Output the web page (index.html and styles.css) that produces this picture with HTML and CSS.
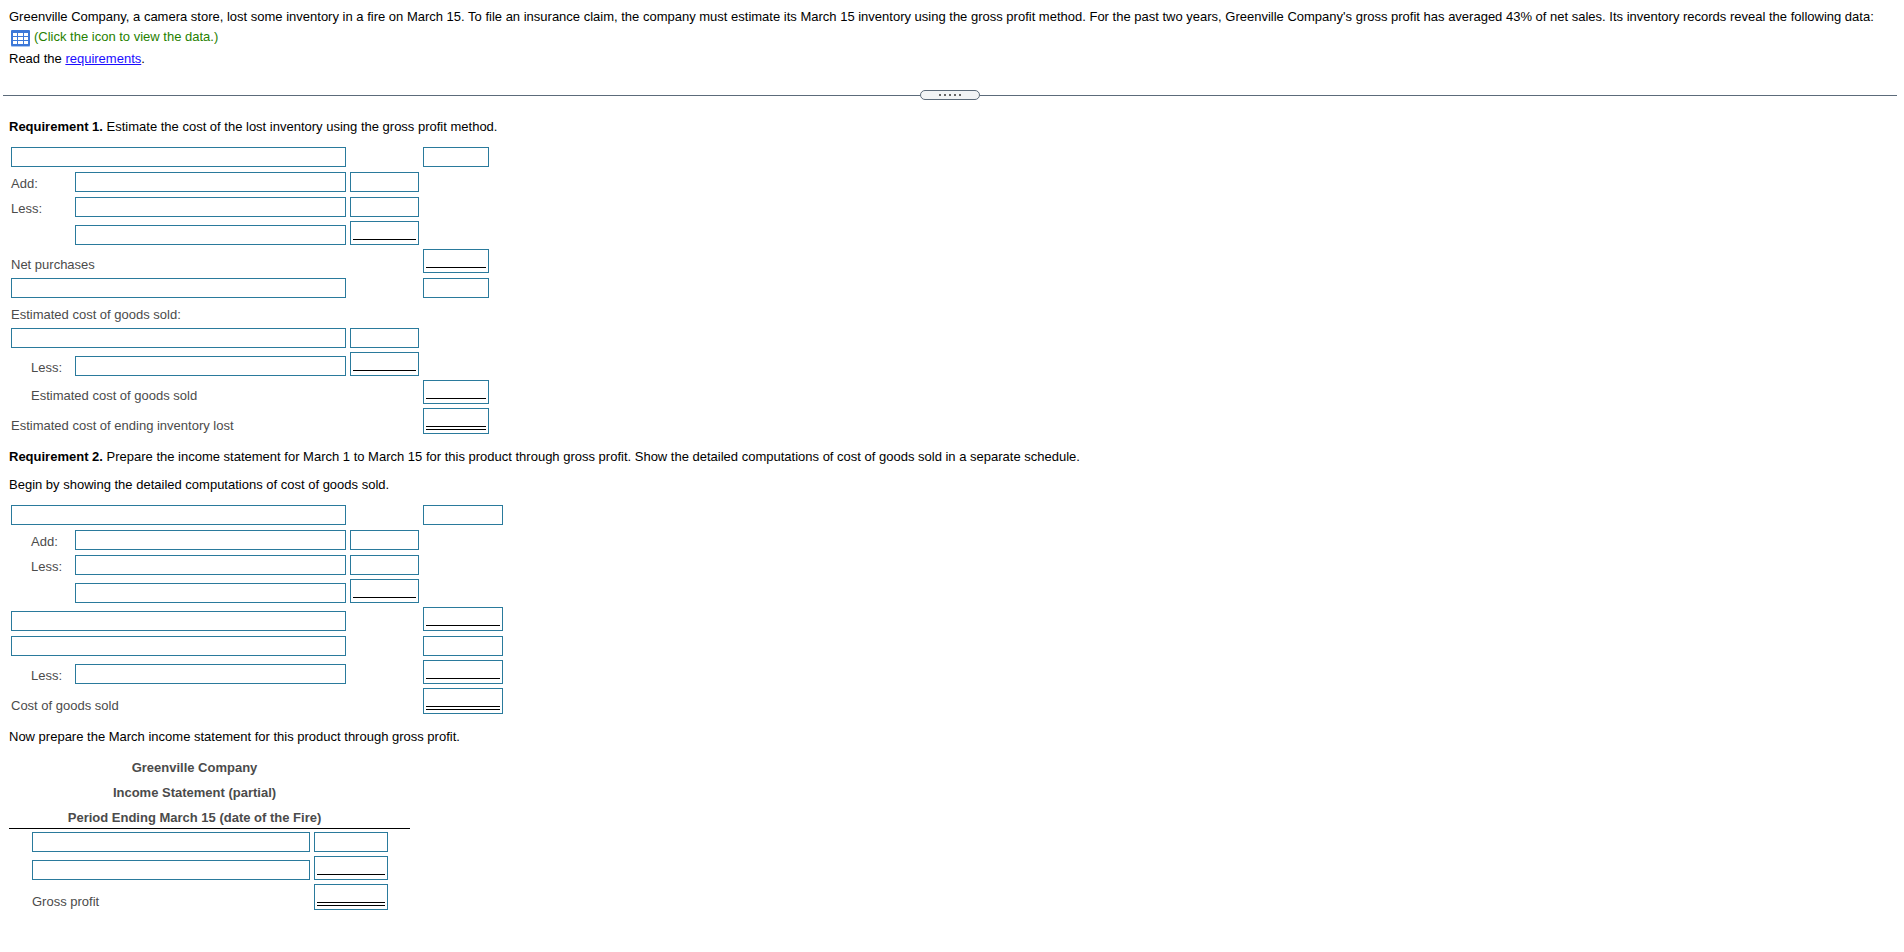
FILE: index.html
```html
<!DOCTYPE html>
<html lang="en">
<head>
<meta charset="utf-8">
<title>Greenville Company - Gross profit method</title>
<link rel="stylesheet" href="styles.css">
</head>
<body>
<header class="intro">
  <p>Greenville Company, a camera store, lost some inventory in a fire on March 15. To file an insurance claim, the company must estimate its March 15 inventory using the gross profit method. For the past two years, Greenville Company's gross profit has averaged 43% of net sales. Its inventory records reveal the following data:</p>
  <button type="button" class="data-button">
    <svg class="data-icon" width="19" height="17" viewBox="0 0 19 17" aria-hidden="true">
      <rect y="1" width="19" height="16" rx="1" fill="#a9c6f2"/>
      <rect width="19" height="16" rx="1" fill="#3c78d8"/>
      <path fill="#fff" d="M2 3h4v3H2zM7 3h5v3H7zM13 3h4v3h-4zM2 7h4v3H2zM7 7h5v3H7zM13 7h4v3h-4zM2 11h4v3H2zM7 11h5v3H7zM13 11h4v3h-4z"/>
    </svg>
    <span>(Click the icon to view the data.)</span>
  </button>
  <p>Read the <a href="#requirements">requirements</a>.</p>
</header>

<div class="divider">
  <button type="button" class="handle" aria-label="Resize panels"><i></i><i></i><i></i><i></i><i></i></button>
</div>

<main class="work">
  <p id="requirements"><b>Requirement 1.</b> Estimate the cost of the lost inventory using the gross profit method.</p>
  <table class="sheet">
    <colgroup><col class="col-label"><col class="col-name"><col class="col-detail"><col class="col-total"></colgroup>
    <tbody>
    <tr><td colspan="2"><div class="box"><input type="text" aria-label="Opening account"></div></td><td></td><td><div class="box"><input type="text" aria-label="Opening amount"></div></td></tr>
    <tr><th scope="row">Add:</th><td><div class="box"><input type="text" aria-label="Added account"></div></td><td><div class="box"><input type="text" aria-label="Added amount"></div></td><td></td></tr>
    <tr><th scope="row">Less:</th><td><div class="box"><input type="text" aria-label="First deducted account"></div></td><td><div class="box"><input type="text" aria-label="First deducted amount"></div></td><td></td></tr>
    <tr><td></td><td><div class="box"><input type="text" aria-label="Second deducted account"></div></td><td><div class="box subtotal"><input type="text" aria-label="Second deducted amount"></div></td><td></td></tr>
    <tr><th scope="row" colspan="2">Net purchases</th><td></td><td><div class="box subtotal"><input type="text" aria-label="Net purchases"></div></td></tr>
    <tr><td colspan="2"><div class="box"><input type="text" aria-label="Subtotal account"></div></td><td></td><td><div class="box"><input type="text" aria-label="Subtotal amount"></div></td></tr>
    <tr><th scope="row" colspan="4">Estimated cost of goods sold:</th></tr>
    <tr><td colspan="2"><div class="box"><input type="text" aria-label="Cost of goods sold base account"></div></td><td><div class="box"><input type="text" aria-label="Cost of goods sold base amount"></div></td><td></td></tr>
    <tr><th scope="row" class="indent">Less:</th><td><div class="box"><input type="text" aria-label="Cost of goods sold deduction"></div></td><td><div class="box subtotal"><input type="text" aria-label="Cost of goods sold deduction amount"></div></td><td></td></tr>
    <tr><th scope="row" class="indent" colspan="2">Estimated cost of goods sold</th><td></td><td><div class="box subtotal"><input type="text" aria-label="Estimated cost of goods sold"></div></td></tr>
    <tr><th scope="row" colspan="2">Estimated cost of ending inventory lost</th><td></td><td><div class="box total"><input type="text" aria-label="Estimated cost of ending inventory lost"></div></td></tr>
    </tbody>
  </table>

  <p><b>Requirement 2.</b> Prepare the income statement for March 1 to March 15 for this product through gross profit. Show the detailed computations of cost of goods sold in a separate schedule.</p>
  <p class="follow">Begin by showing the detailed computations of cost of goods sold.</p>
  <table class="sheet">
    <colgroup><col class="col-label"><col class="col-name"><col class="col-detail"><col class="col-total-wide"></colgroup>
    <tbody>
    <tr><td colspan="2"><div class="box"><input type="text" aria-label="Schedule opening account"></div></td><td></td><td><div class="box"><input type="text" aria-label="Schedule opening amount"></div></td></tr>
    <tr><th scope="row" class="indent">Add:</th><td><div class="box"><input type="text" aria-label="Schedule added account"></div></td><td><div class="box"><input type="text" aria-label="Schedule added amount"></div></td><td></td></tr>
    <tr><th scope="row" class="indent">Less:</th><td><div class="box"><input type="text" aria-label="Schedule first deducted account"></div></td><td><div class="box"><input type="text" aria-label="Schedule first deducted amount"></div></td><td></td></tr>
    <tr><td></td><td><div class="box"><input type="text" aria-label="Schedule second deducted account"></div></td><td><div class="box subtotal"><input type="text" aria-label="Schedule second deducted amount"></div></td><td></td></tr>
    <tr><td colspan="2"><div class="box"><input type="text" aria-label="Schedule net account"></div></td><td></td><td><div class="box subtotal"><input type="text" aria-label="Schedule net amount"></div></td></tr>
    <tr><td colspan="2"><div class="box"><input type="text" aria-label="Schedule subtotal account"></div></td><td></td><td><div class="box"><input type="text" aria-label="Schedule subtotal amount"></div></td></tr>
    <tr><th scope="row" class="indent">Less:</th><td><div class="box"><input type="text" aria-label="Schedule final deduction"></div></td><td></td><td><div class="box subtotal"><input type="text" aria-label="Schedule final deduction amount"></div></td></tr>
    <tr><th scope="row" colspan="2">Cost of goods sold</th><td></td><td><div class="box total"><input type="text" aria-label="Cost of goods sold"></div></td></tr>
    </tbody>
  </table>

  <p>Now prepare the March income statement for this product through gross profit.</p>
  <table class="sheet statement">
    <colgroup><col class="col-item"><col class="col-amount"><col class="col-end"></colgroup>
    <thead>
    <tr><th colspan="3">Greenville Company</th></tr>
    <tr><th colspan="3">Income Statement (partial)</th></tr>
    <tr><th colspan="3">Period Ending March 15 (date of the Fire)</th></tr>
    </thead>
    <tbody>
    <tr><td class="item"><div class="box"><input type="text" aria-label="First statement line"></div></td><td><div class="box"><input type="text" aria-label="First statement amount"></div></td><td></td></tr>
    <tr><td class="item"><div class="box"><input type="text" aria-label="Second statement line"></div></td><td><div class="box subtotal"><input type="text" aria-label="Second statement amount"></div></td><td></td></tr>
    <tr><th scope="row" class="item">Gross profit</th><td><div class="box total"><input type="text" aria-label="Gross profit"></div></td><td></td></tr>
    </tbody>
  </table>
</main>
</body>
</html>
```
FILE: styles.css
```css
* { box-sizing: border-box; }

body {
  margin: 0;
  background: #fff;
  color: #000;
  font: 13px/15px "Liberation Sans", Arial, sans-serif;
}

p { margin: 0; }

a { color: #1a0dff; }

button,
input { font: inherit; }

.intro { padding: 9px 9px 0; }

.data-button {
  display: flex;
  align-items: flex-start;
  gap: 4px;
  height: 27px;
  padding: 5px 0 0 2px;
  border: 0;
  background: none;
  color: #267f00;
  cursor: pointer;
}

.data-icon { margin-top: 1px; }

.divider {
  display: flex;
  align-items: flex-start;
  margin: 24px 7px 0 3px;
}

.divider::before,
.divider::after {
  content: "";
  flex: 1;
  height: 1px;
  margin-top: 5px;
  background: #5c6b7a;
}

.handle {
  display: flex;
  justify-content: center;
  align-items: center;
  gap: 3px;
  width: 60px;
  height: 10px;
  padding: 0;
  border: 1px solid #5c6b7a;
  border-radius: 5px;
  background: #f2f4f5;
}

.handle i {
  width: 2px;
  height: 2px;
  background: #666;
}

.work { padding: 19px 9px 24px; }

.work .follow { margin-top: 13px; }

.sheet {
  table-layout: fixed;
  width: min-content;
  margin: 10px 0 13px;
  border-collapse: separate;
  border-spacing: 0;
  color: #4b4b4b;
}

.col-label { width: 64px; }
.col-name { width: 275px; }
.col-detail { width: 73px; }
.col-total { width: 70px; }
.col-total-wide { width: 84px; }

.sheet td,
.sheet th {
  height: 25px;
  padding: 2px;
  vertical-align: bottom;
}

.sheet th {
  padding-bottom: 3px;
  font-weight: normal;
  text-align: left;
}

.sheet .indent { padding-left: 22px; }

.box {
  height: 20px;
  padding: 0 2px;
  border: 1px solid #2a7a9c;
}

.box input {
  display: block;
  width: 100%;
  height: 18px;
  padding: 0;
  border: 0;
  outline: 0;
  background: none;
}

.box.subtotal { height: 24px; }
.box.subtotal input { border-bottom: 1px solid #000; }

.box.total { height: 26px; }
.box.total input {
  height: 21px;
  border-bottom: 4px double #000;
}

.col-item { width: 303px; }
.col-amount { width: 78px; }
.col-end { width: 20px; }

.sheet.statement thead th {
  padding-right: 32px;
  padding-bottom: 4px;
  font-weight: bold;
  text-align: center;
}

.sheet.statement thead tr:last-child th {
  padding-bottom: 3px;
  border-bottom: 1px solid #000;
}

.statement .item { padding-left: 23px; }
```
